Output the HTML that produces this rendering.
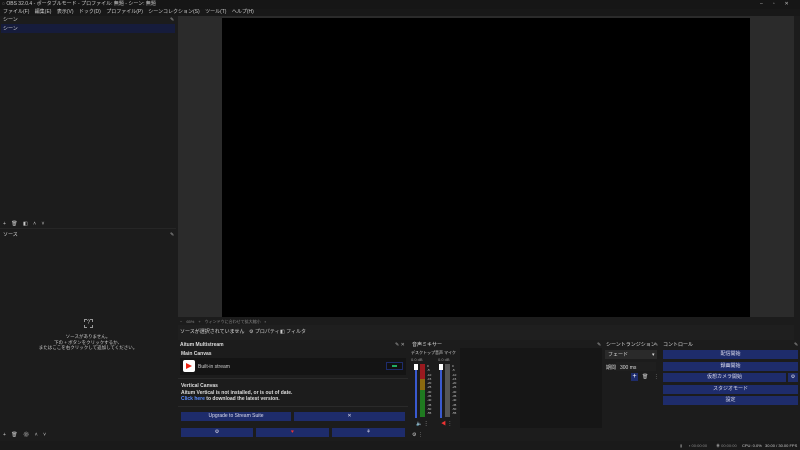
<!DOCTYPE html><html><head><meta charset="utf-8"><style>
*{margin:0;padding:0;box-sizing:border-box}
body{width:800px;height:450px;background:#1c1c1c;overflow:hidden;position:relative;font-family:"Liberation Sans","Noto Sans CJK JP",sans-serif;color:#ddd;font-size:5px}
.a{position:absolute}
.t{white-space:nowrap;font-size:5px;line-height:6px}
.btn{position:absolute;background:#1e2c6b;color:#dde;text-align:center;font-size:5px;line-height:9px}
</style></head><body>
<div class="a" style="left:0;top:0;width:800px;height:9px;background:#161616"></div>
<div class="a t" style="left:2px;top:1px;color:#ccc">◌ OBS 32.0.4 - ポータブルモード - プロファイル: 無題 - シーン: 無題</div>
<div class="a t" style="left:760px;top:1px;color:#bbb;letter-spacing:10px">–▫✕</div>
<div class="a" style="left:0;top:9px;width:800px;height:7px;background:#181818"></div>
<div class="a t" style="left:3px;top:9px;color:#ccc;word-spacing:4px">ファイル(F) 編集(E) 表示(V) ドック(D) プロファイル(P) シーンコレクション(S) ツール(T) ヘルプ(H)</div>
<!-- scenes -->
<div class="a t" style="left:3px;top:17px">シーン</div>
<div class="a t" style="left:170px;top:17px;color:#aaa">✎</div>
<div class="a" style="left:1px;top:24px;width:174px;height:9px;background:#161c3c"></div>
<div class="a t" style="left:3px;top:26px">シーン</div>
<div class="a" style="left:0;top:228px;width:176px;height:1px;background:#262626"></div>
<div class="a t" style="left:3px;top:221px;color:#ccc;word-spacing:4px">+ 🗑 ◧ ˄ ˅</div>
<!-- sources -->
<div class="a t" style="left:3px;top:232px">ソース</div>
<div class="a t" style="left:170px;top:232px;color:#aaa">✎</div>
<div class="a" style="left:84px;top:319px;width:9px;height:9px;border:1px dashed #999;color:#bbb;text-align:center;font-size:6px;line-height:7px">?</div>
<div class="a t" style="left:0;width:176px;text-align:center;top:334px;color:#ccc;font-size:4.5px;line-height:5.5px">ソースがありません。<br>下の + ボタンをクリックするか、<br>またはここを右クリックして追加してください。</div>
<div class="a t" style="left:3px;top:432px;color:#ccc;word-spacing:4px">+ 🗑 ⚙ ˄ ˅</div>
<!-- preview -->
<div class="a" style="left:178px;top:16px;width:616px;height:301px;background:#2b2b2b"></div>
<div class="a" style="left:222px;top:18px;width:528px;height:299px;background:#000"></div>
<div class="a t" style="left:180px;top:319px;color:#888;font-size:4px">−　65%　+　ウィンドウに合わせて拡大縮小　▪</div>
<div class="a" style="left:178px;top:325px;width:616px;height:15px;background:#1f1f1f"></div>
<div class="a t" style="left:180px;top:329px">ソースが選択されていません</div>
<div class="a t" style="left:249px;top:329px;color:#ccc">⚙ プロパティ</div>
<div class="a t" style="left:280px;top:329px;color:#ccc">◧ フィルタ</div>
<!-- aitum -->
<div class="a" style="left:178px;top:340px;width:230px;height:98px;background:#1c1c1c"></div>
<div class="a t" style="left:180px;top:342px;font-weight:bold">Aitum Multistream</div>
<div class="a t" style="left:395px;top:342px;color:#aaa">✎ ✕</div>
<div class="a t" style="left:181px;top:351px;font-weight:bold">Main Canvas</div>
<div class="a" style="left:180px;top:358px;width:226px;height:17px;background:#141414"></div>
<div class="a" style="left:183px;top:360px;width:12px;height:12px;background:#fff;border-radius:2px"></div>
<div class="a" style="left:186px;top:363px;width:0;height:0;border-left:6px solid #e21;border-top:3.5px solid transparent;border-bottom:3.5px solid transparent"></div>
<div class="a t" style="left:198px;top:364px;color:#ccc">Built-in stream</div>
<div class="a" style="left:386px;top:362px;width:17px;height:8px;border:1px solid #1e2c6b;background:#111"><div style="margin:2px 5px;width:5px;height:2px;background:#2a6"></div></div>
<div class="a" style="left:178px;top:378px;width:230px;height:1px;background:#2a2a2a"></div>
<div class="a t" style="left:181px;top:383px;font-weight:bold">Vertical Canvas</div>
<div class="a t" style="left:181px;top:390px;font-weight:bold">Aitum Vertical is not installed, or is out of date.</div>
<div class="a t" style="left:181px;top:396px;font-weight:bold"><span style="color:#5a8cff">Click here</span> to download the latest version.</div>
<div class="a" style="left:178px;top:406px;width:230px;height:1px;background:#2a2a2a"></div>
<div class="btn" style="left:181px;top:412px;width:110px;height:9px">Upgrade to Stream Suite</div>
<div class="btn" style="left:294px;top:412px;width:111px;height:9px">✕</div>
<div class="btn" style="left:181px;top:428px;width:72px;height:9px">⚙</div>
<div class="btn" style="left:256px;top:428px;width:73px;height:9px;color:#e33">♥</div>
<div class="btn" style="left:332px;top:428px;width:73px;height:9px">⚘</div>
<!-- mixer -->
<div class="a t" style="left:412px;top:342px">音声ミキサー</div>
<div class="a t" style="left:597px;top:342px;color:#aaa">✎</div>
<div class="a t" style="left:411px;top:350px;font-size:4px">デスクトップ音声</div>
<div class="a t" style="left:444px;top:350px;font-size:4px">マイク</div>
<div class="a t" style="left:411px;top:357px;font-size:4px;color:#999">0.0 dB</div>
<div class="a t" style="left:438px;top:357px;font-size:4px;color:#999">0.0 dB</div>
<div class="a" style="left:415px;top:365px;width:2px;height:53px;background:#3a5ad0"></div>
<div class="a" style="left:414px;top:364px;width:4px;height:6px;background:#fff"></div>
<div class="a" style="left:420px;top:364px;width:5px;height:15px;background:#9a1a1f"></div>
<div class="a" style="left:420px;top:379px;width:5px;height:11px;background:#8a6a10"></div>
<div class="a" style="left:420px;top:390px;width:5px;height:27px;background:#1f7a20"></div>
<div class="a t" style="left:427px;top:364px;font-size:3px;line-height:4.3px;color:#ccc">0<br>-5<br>-10<br>-15<br>-20<br>-25<br>-30<br>-35<br>-40<br>-45<br>-50<br>-55</div>
<div class="a" style="left:440px;top:365px;width:2px;height:53px;background:#3a5ad0"></div>
<div class="a" style="left:439px;top:364px;width:4px;height:6px;background:#fff"></div>
<div class="a" style="left:445px;top:364px;width:5px;height:53px;background:#555"></div>
<div class="a t" style="left:452px;top:364px;font-size:3px;line-height:4.3px;color:#ccc">0<br>-5<br>-10<br>-15<br>-20<br>-25<br>-30<br>-35<br>-40<br>-45<br>-50<br>-55</div>
<div class="a t" style="left:416px;top:421px;color:#fff">🔈 ⋮</div>
<div class="a t" style="left:441px;top:421px;color:#e33">◀<span style="color:#ccc"> ⋮</span></div>
<div class="a" style="left:460px;top:348px;width:142px;height:80px;background:#161616"></div>
<div class="a t" style="left:412px;top:432px;color:#ccc">⚙ ⋮</div>
<!-- transitions -->
<div class="a t" style="left:606px;top:342px">シーントランジション</div>
<div class="a t" style="left:654px;top:342px;color:#aaa">✎</div>
<div class="a" style="left:605px;top:350px;width:52px;height:9px;background:#2a2a2a"></div>
<div class="a t" style="left:608px;top:352px">フェード</div>
<div class="a t" style="left:652px;top:352px">▾</div>
<div class="a t" style="left:606px;top:365px">期間</div>
<div class="a" style="left:616px;top:362px;width:40px;height:9px;background:#1f1f1f"></div>
<div class="a t" style="left:620px;top:365px">300 ms</div>
<div class="a" style="left:631px;top:373px;width:7px;height:8px;background:#1e2c6b;color:#fff;font-size:7px;line-height:8px;text-align:center">+</div>
<div class="a t" style="left:642px;top:374px;color:#ccc;word-spacing:4px">🗑 ⋮</div>
<!-- controls -->
<div class="a t" style="left:663px;top:342px">コントロール</div>
<div class="a t" style="left:794px;top:342px;color:#aaa">✎</div>
<div class="btn" style="left:663px;top:350px;width:135px;height:9px">配信開始</div>
<div class="btn" style="left:663px;top:362px;width:135px;height:9px">録画開始</div>
<div class="btn" style="left:663px;top:373px;width:123px;height:9px">仮想カメラ開始</div>
<div class="btn" style="left:788px;top:373px;width:10px;height:9px">⚙</div>
<div class="btn" style="left:663px;top:385px;width:135px;height:9px">スタジオモード</div>
<div class="btn" style="left:663px;top:396px;width:135px;height:9px">設定</div>
<!-- status -->
<div class="a" style="left:0;top:441px;width:800px;height:9px;background:#1a1a1a"></div>
<div class="a t" style="left:680px;top:443px;color:#777;font-size:4px">▮</div>
<div class="a t" style="left:689px;top:443px;color:#888;font-size:4px">▪ 00:00:00</div>
<div class="a t" style="left:716px;top:443px;color:#888;font-size:4px">◉ 00:00:00</div>
<div class="a t" style="left:742px;top:443px;color:#ccc;font-size:4px">CPU: 0.0%</div>
<div class="a t" style="left:765px;top:443px;color:#ccc;font-size:4px">30.00 / 30.00 FPS</div>
</body></html>
